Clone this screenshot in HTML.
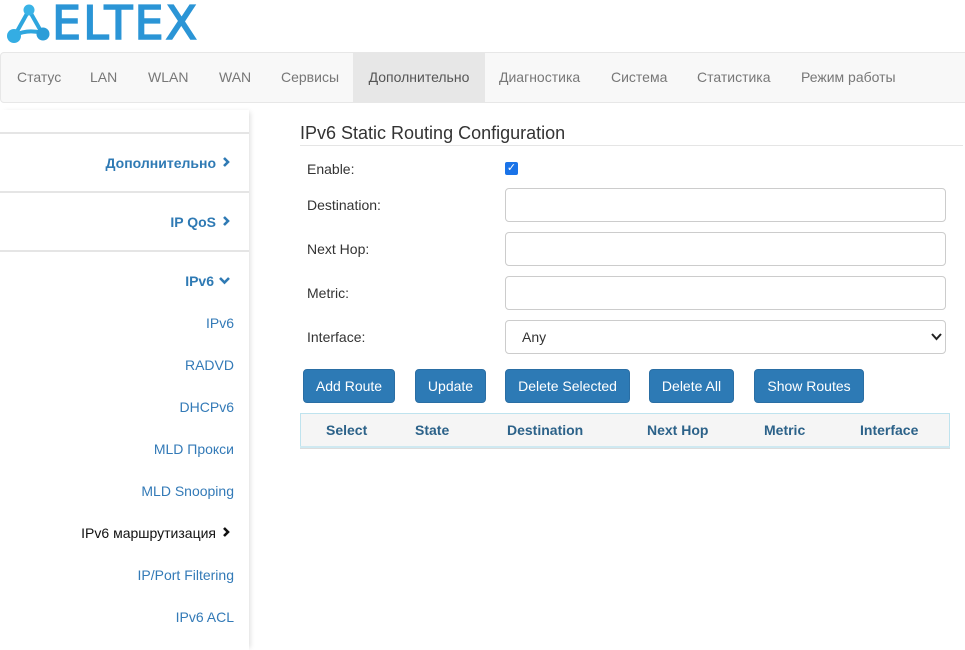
<!DOCTYPE html>
<html><head><meta charset="utf-8"><style>
*{box-sizing:border-box}
body{margin:0;width:965px;height:632px;overflow:hidden;background:#fff;font-family:"Liberation Sans",Arial,sans-serif;font-size:14px;color:#333;position:relative}
.abs{position:absolute}
.nav{left:0;top:52px;width:975px;height:51px;background:#f8f8f8;border:1px solid #e7e7e7;border-radius:4px}
.nav span{position:absolute;top:0;height:49px;line-height:49px;color:#777;font-size:14px}
.side{left:0;top:110px;width:249px;height:540px;background:#fff;box-shadow:3px 0 5px -2px rgba(0,0,0,.15)}
.sep{position:absolute;left:0;width:249px;height:2px;background:#e5e5e5}
.it{position:absolute;right:15px;font-size:14px;color:#337ab7;white-space:nowrap}
.b{font-weight:bold;color:#2f7ab4;right:17px}
.lbl{position:absolute;left:307px;font-size:14px;color:#333}
.inp{position:absolute;left:505px;width:441px;height:34px;border:1px solid #ccc;border-radius:4px;background:#fff}
.btn{position:absolute;top:369px;height:34px;line-height:32px;background:#2d7ab5;color:#fff;border-radius:4px;text-align:center;font-size:14px;border:1px solid #2a6ea4}
.th{position:absolute;top:422px;font-weight:bold;color:#2c6289;font-size:14px}
</style></head><body>
<svg class="abs" style="left:5px;top:2px" width="46" height="42" viewBox="0 0 46 42">
<g stroke="#2ea6de" stroke-width="4" fill="none"><line x1="24" y1="8" x2="10" y2="33"/><line x1="24" y1="8" x2="37" y2="31"/><path d="M10 33 Q23 27 37 31"/></g>
<circle cx="24" cy="8" r="5.5" fill="#3ab3e6"/><circle cx="9" cy="34" r="7" fill="#34ade3"/><circle cx="38" cy="32" r="6.5" fill="#2b9dd8"/></svg>
<div class="abs" style="left:52px;top:-4px;font-size:46px;letter-spacing:2px;color:#2b95d6;font-family:'DejaVu Sans',sans-serif;-webkit-text-stroke:1.5px #2b95d6">ELTEX</div>
<div class="abs nav">
<span style="left:16px">Статус</span><span style="left:89px">LAN</span><span style="left:147px">WLAN</span><span style="left:218px">WAN</span><span style="left:280px">Сервисы</span>
<span style="left:352px;width:132px;background:#e7e7e7;color:#555;text-align:center">Дополнительно</span>
<span style="left:498px">Диагностика</span><span style="left:610px">Система</span><span style="left:696px">Статистика</span><span style="left:800px">Режим работы</span>
</div>
<div class="abs side">
<div class="sep" style="top:22px"></div><div class="sep" style="top:81px"></div><div class="sep" style="top:140px"></div>
<div class="it b" style="top:45px">Дополнительно<svg width="14" height="12" viewBox="0 0 14 12" style="margin-left:2px"><path d="M6 2 L10 6 L6 10" stroke="#2f7ab4" stroke-width="2.6" fill="none"/></svg></div>
<div class="it b" style="top:104px">IP QoS<svg width="14" height="12" viewBox="0 0 14 12" style="margin-left:2px"><path d="M6 2 L10 6 L6 10" stroke="#2f7ab4" stroke-width="2.6" fill="none"/></svg></div>
<div class="it b" style="top:163px">IPv6<svg width="16" height="10" viewBox="0 0 16 10" style="margin-left:2px"><path d="M4 2 L8.5 6.5 L13 2" stroke="#2f7ab4" stroke-width="2.6" fill="none"/></svg></div>
<div class="it" style="top:205px">IPv6</div>
<div class="it" style="top:247px">RADVD</div>
<div class="it" style="top:289px">DHCPv6</div>
<div class="it" style="top:331px">MLD Прокси</div>
<div class="it" style="top:373px">MLD Snooping</div>
<div class="it" style="top:415px;right:17px;color:#111">IPv6 маршрутизация<svg width="14" height="12" viewBox="0 0 14 12" style="margin-left:2px"><path d="M6 2 L10 6 L6 10" stroke="#111" stroke-width="2.6" fill="none"/></svg></div>
<div class="it" style="top:457px">IP/Port Filtering</div>
<div class="it" style="top:499px">IPv6 ACL</div>
</div>
<div class="abs" style="left:300px;top:123px;font-size:18px;color:#333">IPv6 Static Routing Configuration</div>
<div class="abs" style="left:300px;top:145px;width:663px;height:1px;background:#e5e5e5"></div>
<div class="lbl" style="top:161px">Enable:</div>
<div class="abs" style="left:505px;top:162px;width:13px;height:13px;background:#1a73e8;border-radius:2px;color:#fff;font-size:11px;line-height:13px;text-align:center">✓</div>
<div class="lbl" style="top:197px">Destination:</div><div class="inp" style="top:188px"></div>
<div class="lbl" style="top:241px">Next Hop:</div><div class="inp" style="top:232px"></div>
<div class="lbl" style="top:285px">Metric:</div><div class="inp" style="top:276px"></div>
<div class="lbl" style="top:329px">Interface:</div><div class="inp" style="top:320px;padding-left:16px;line-height:32px;color:#333">Any<svg style="position:absolute;right:3px;top:11px" width="11" height="9" viewBox="0 0 11 9"><path d="M1 2 L5.5 7 L10 2" stroke="#222" stroke-width="2" fill="none"/></svg></div>
<div class="btn" style="left:303px;width:92px">Add Route</div>
<div class="btn" style="left:415px;width:71px">Update</div>
<div class="btn" style="left:505px;width:125px">Delete Selected</div>
<div class="btn" style="left:649px;width:85px">Delete All</div>
<div class="btn" style="left:754px;width:110px">Show Routes</div>
<div class="abs" style="left:300px;top:413px;width:650px;height:36px;background:#f5f5f5;border:1px solid #bfe3ee;border-bottom:3px solid #dcdcdc"></div>
<div class="abs" style="left:300px;top:446px;width:650px;height:2px;background:#cfe9f1"></div>
<div class="th" style="left:326px">Select</div><div class="th" style="left:415px">State</div><div class="th" style="left:507px">Destination</div><div class="th" style="left:647px">Next Hop</div><div class="th" style="left:764px">Metric</div><div class="th" style="left:860px">Interface</div>
</body></html>
